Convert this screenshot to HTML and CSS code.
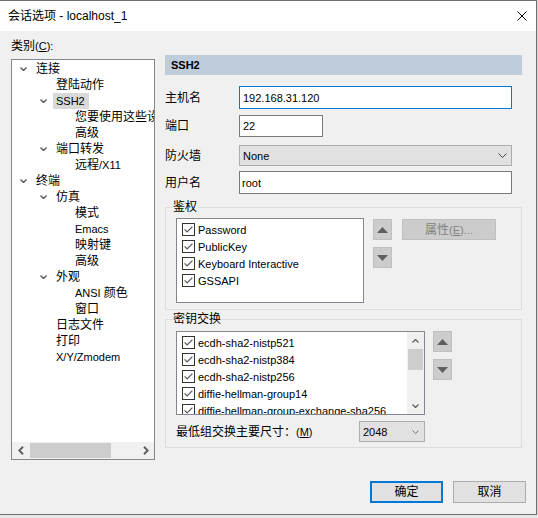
FILE: index.html
```html
<!DOCTYPE html>
<html lang="zh-CN">
<head>
<meta charset="utf-8">
<title>会话选项 - localhost_1</title>
<link rel="stylesheet" href="styles.css">
</head>
<body>
<div class="window">
  <div class="titlebar">
    <span class="title">会话选项 - localhost_1</span>
    <svg class="close" width="10" height="10" viewBox="0 0 10 10"><path d="M0.5 0.5 L9.5 9.5 M9.5 0.5 L0.5 9.5"/></svg>
  </div>
  <div class="client">
    <div class="main">
      <div class="left">
        <div class="cat-label">类别<span class="en">(<u>C</u>):</span></div>
        <div class="tree">
          <div class="tree-rows">
            <div class="node l0"><svg class="chev" width="7" height="4" viewBox="0 0 7 4"><path d="M0.5 0.5 L3.5 3.5 L6.5 0.5"/></svg><span>连接</span></div>
            <div class="node l1">登陆动作</div>
            <div class="node l1"><svg class="chev" width="7" height="4" viewBox="0 0 7 4"><path d="M0.5 0.5 L3.5 3.5 L6.5 0.5"/></svg><span class="sel en">SSH2</span></div>
            <div class="node l2">您要使用这些设置吗</div>
            <div class="node l2">高级</div>
            <div class="node l1"><svg class="chev" width="7" height="4" viewBox="0 0 7 4"><path d="M0.5 0.5 L3.5 3.5 L6.5 0.5"/></svg><span>端口转发</span></div>
            <div class="node l2">远程<span class="en">/X11</span></div>
            <div class="node l0"><svg class="chev" width="7" height="4" viewBox="0 0 7 4"><path d="M0.5 0.5 L3.5 3.5 L6.5 0.5"/></svg><span>终端</span></div>
            <div class="node l1"><svg class="chev" width="7" height="4" viewBox="0 0 7 4"><path d="M0.5 0.5 L3.5 3.5 L6.5 0.5"/></svg><span>仿真</span></div>
            <div class="node l2">模式</div>
            <div class="node l2"><span class="en">Emacs</span></div>
            <div class="node l2">映射键</div>
            <div class="node l2">高级</div>
            <div class="node l1"><svg class="chev" width="7" height="4" viewBox="0 0 7 4"><path d="M0.5 0.5 L3.5 3.5 L6.5 0.5"/></svg><span>外观</span></div>
            <div class="node l2"><span class="en">ANSI&nbsp;</span>颜色</div>
            <div class="node l2">窗口</div>
            <div class="node l1">日志文件</div>
            <div class="node l1">打印</div>
            <div class="node l1"><span class="en">X/Y/Zmodem</span></div>
          </div>
          <div class="hscroll">
            <div class="harrow"><svg width="6" height="9" viewBox="0 0 6 9"><path d="M5 0.8 L1.3 4.5 L5 8.2"/></svg></div>
            <div class="htrack"><div class="hthumb"></div></div>
            <div class="harrow"><svg width="6" height="9" viewBox="0 0 6 9"><path d="M1 0.8 L4.7 4.5 L1 8.2"/></svg></div>
          </div>
        </div>
      </div>

      <div class="right">
        <div class="header en">SSH2</div>
        <div class="frow r1"><span class="flabel">主机名</span><div class="field focus wide"><span class="en">192.168.31.120</span></div></div>
        <div class="frow r2"><span class="flabel">端口</span><div class="field port"><span class="en">22</span></div></div>
        <div class="frow r3"><span class="flabel">防火墙</span><div class="select wide"><span class="en">None</span><svg class="dd" width="9" height="5" viewBox="0 0 9 5"><path d="M0.5 0.5 L4.5 4.5 L8.5 0.5"/></svg></div></div>
        <div class="frow r4"><span class="flabel">用户名</span><div class="field wide user"><span class="en">root</span></div></div>

        <fieldset class="grp g1">
          <legend>鉴权</legend>
          <div class="grp-body">
            <div class="list list1">
              <div class="item"><svg class="cb" width="13" height="13" viewBox="0 0 13 13"><rect x="0.5" y="0.5" width="12" height="12"/><path d="M2.6 6.4 L5.1 8.9 L10.4 3.6"/></svg><span class="en">Password</span></div>
              <div class="item"><svg class="cb" width="13" height="13" viewBox="0 0 13 13"><rect x="0.5" y="0.5" width="12" height="12"/><path d="M2.6 6.4 L5.1 8.9 L10.4 3.6"/></svg><span class="en">PublicKey</span></div>
              <div class="item"><svg class="cb" width="13" height="13" viewBox="0 0 13 13"><rect x="0.5" y="0.5" width="12" height="12"/><path d="M2.6 6.4 L5.1 8.9 L10.4 3.6"/></svg><span class="en">Keyboard Interactive</span></div>
              <div class="item"><svg class="cb" width="13" height="13" viewBox="0 0 13 13"><rect x="0.5" y="0.5" width="12" height="12"/><path d="M2.6 6.4 L5.1 8.9 L10.4 3.6"/></svg><span class="en">GSSAPI</span></div>
            </div>
            <div class="arrows a1">
              <div class="abtn"><svg width="11" height="6" viewBox="0 0 11 6"><path d="M0 6 L5.5 0 L11 6 Z"/></svg></div>
              <div class="abtn"><svg width="11" height="6" viewBox="0 0 11 6"><path d="M0 0 L5.5 6 L11 0 Z"/></svg></div>
            </div>
            <div class="btn prop">属性<span class="en">(<u>E</u>)...</span></div>
          </div>
        </fieldset>

        <fieldset class="grp g2">
          <legend>密钥交换</legend>
          <div class="grp-body">
            <div class="list list2">
              <div class="items">
                <div class="item"><svg class="cb" width="13" height="13" viewBox="0 0 13 13"><rect x="0.5" y="0.5" width="12" height="12"/><path d="M2.6 6.4 L5.1 8.9 L10.4 3.6"/></svg><span class="en">ecdh-sha2-nistp521</span></div>
                <div class="item"><svg class="cb" width="13" height="13" viewBox="0 0 13 13"><rect x="0.5" y="0.5" width="12" height="12"/><path d="M2.6 6.4 L5.1 8.9 L10.4 3.6"/></svg><span class="en">ecdh-sha2-nistp384</span></div>
                <div class="item"><svg class="cb" width="13" height="13" viewBox="0 0 13 13"><rect x="0.5" y="0.5" width="12" height="12"/><path d="M2.6 6.4 L5.1 8.9 L10.4 3.6"/></svg><span class="en">ecdh-sha2-nistp256</span></div>
                <div class="item"><svg class="cb" width="13" height="13" viewBox="0 0 13 13"><rect x="0.5" y="0.5" width="12" height="12"/><path d="M2.6 6.4 L5.1 8.9 L10.4 3.6"/></svg><span class="en">diffie-hellman-group14</span></div>
                <div class="item"><svg class="cb" width="13" height="13" viewBox="0 0 13 13"><rect x="0.5" y="0.5" width="12" height="12"/><path d="M2.6 6.4 L5.1 8.9 L10.4 3.6"/></svg><span class="en">diffie-hellman-group-exchange-sha256</span></div>
              </div>
              <div class="vscroll">
                <div class="varrow"><svg width="7" height="4" viewBox="0 0 7 4"><path d="M0.5 3.5 L3.5 0.5 L6.5 3.5"/></svg></div>
                <div class="vtrack"><div class="vthumb"></div></div>
                <div class="varrow"><svg width="7" height="4" viewBox="0 0 7 4"><path d="M0.5 0.5 L3.5 3.5 L6.5 0.5"/></svg></div>
              </div>
            </div>
            <div class="arrows a2">
              <div class="abtn"><svg width="11" height="6" viewBox="0 0 11 6"><path d="M0 6 L5.5 0 L11 6 Z"/></svg></div>
              <div class="abtn"><svg width="11" height="6" viewBox="0 0 11 6"><path d="M0 0 L5.5 6 L11 0 Z"/></svg></div>
            </div>
          </div>
          <div class="minrow">
            <span>最低组交换主要尺寸：<span class="en">(<u>M</u>)</span></span>
            <div class="select small"><span class="en">2048</span><svg class="dd light" width="7" height="4" viewBox="0 0 7 4"><path d="M0.5 0.5 L3.5 3.5 L6.5 0.5"/></svg></div>
          </div>
        </fieldset>
      </div>
    </div>
    <div class="footer">
      <div class="btn ok">确定</div>
      <div class="btn cancel">取消</div>
    </div>
  </div>
</div>
</body>
</html>
```

FILE: styles.css
```css
* { box-sizing: border-box; }
html { background: #e6e6e6; }
body {
  margin: 0;
  font-family: "Liberation Sans", "Noto Sans CJK SC", sans-serif;
  font-size: 12px;
  line-height: 16px;
  color: #000;
}
.en { font-size: 11px; }
u { text-decoration: underline; text-underline-offset: 1px; }

.window {
  width: 537px;
  height: 515px;
  border-top: 1px solid #707070;
  border-right: 1px solid #707070;
  border-bottom: 1px solid #707070;
  background: #f0f0f0;
  display: flex;
  flex-direction: column;
  box-shadow: 0 1px 3px rgba(0, 0, 0, 0.22);
}

.titlebar {
  height: 30px;
  flex: none;
  background: #fff;
  display: flex;
  align-items: center;
  padding: 0 9px 0 8px;
}
.title { flex: 1; font-size: 12px; }
.close { fill: none; stroke: #000; stroke-width: 1; }

.client {
  flex: 1;
  display: flex;
  flex-direction: column;
  padding: 7px 10px 0 11px;
}
.main {
  display: grid;
  grid-template-columns: 144px 357px;
  column-gap: 10px;
  align-items: start;
}

/* left tree */
.cat-label { height: 16px; }
.tree {
  margin-top: 5px;
  height: 401px;
  border: 1px solid #828790;
  background: #fff;
  display: flex;
  flex-direction: column;
}
.tree-rows {
  flex: 1;
  overflow: hidden;
  padding-top: 1px;
}
.node {
  height: 16px;
  display: flex;
  align-items: center;
  white-space: nowrap;
}
.node.l0 { padding-left: 24px; }
.node.l1 { padding-left: 44px; }
.node.l2 { padding-left: 63px; }
.chev {
  flex: none;
  margin-left: -16px;
  margin-right: 9px;
  fill: none;
  stroke: #555;
  stroke-width: 1.4;
}
.sel {
  background: #d9d9d9;
  height: 16px;
  padding: 0 4px 0 3px;
  margin-left: -3px;
}

.hscroll {
  flex: none;
  height: 17px;
  background: #f0f0f0;
  display: flex;
}
.harrow {
  width: 17px;
  display: flex;
  align-items: center;
  justify-content: center;
}
.harrow svg { fill: none; stroke: #606060; stroke-width: 2; }
.htrack { flex: 1; padding: 1px 0 1px 1px; }
.hthumb { width: 81px; height: 15px; background: #cdcdcd; }

/* right panel */
.right { margin-top: 17px; }
.header {
  height: 20px;
  background: #bfcddb;
  font-weight: bold;
  padding-left: 6px;
  display: flex;
  align-items: center;
}
.frow { display: flex; align-items: center; }
.flabel { width: 74px; flex: none; }
.r1 { margin-top: 11px; height: 23px; }
.r2 { margin-top: 6px; height: 22px; }
.r3 { margin-top: 8px; height: 21px; }
.r4 { margin-top: 5px; height: 23px; }

.field {
  height: 100%;
  border: 1px solid #7a7a7a;
  background: #fff;
  display: flex;
  align-items: center;
  padding-left: 3px;
}
.field.focus { border-color: #0078d7; }
.field.user { padding-left: 2px; }
.wide { width: 273px; }
.port { width: 84px; }

.select {
  height: 100%;
  border: 1px solid #adadad;
  background: #e1e1e1;
  display: flex;
  align-items: center;
  justify-content: space-between;
  padding: 0 4px 0 3px;
}
.dd { fill: none; stroke: #444; stroke-width: 1; }
.dd.light { stroke: #777; margin-right: 1px; }

/* groups */
.grp {
  margin: 0;
  border: 1px solid #dcdcdc;
  padding: 0 10px 0 10px;
  min-width: 0;
}
.grp legend {
  padding: 0 1px;
  margin-left: -4px;
  line-height: 16px;
}
.g1 { margin-top: 5px; padding-top: 3px; padding-bottom: 6px; }
.g2 { margin-top: 1px; padding-top: 4px; padding-bottom: 5px; }
.grp-body { display: flex; align-items: flex-start; }

.list {
  border: 1px solid #828790;
  background: #fff;
}
.list1 { width: 188px; height: 85px; padding-top: 2px; }
.list2 { width: 249px; height: 84px; display: flex; }
.items { flex: 1; overflow: hidden; padding-top: 2px; min-width: 0; }
.item {
  height: 17px;
  display: flex;
  align-items: center;
  padding-left: 5px;
  white-space: nowrap;
}
.cb { flex: none; margin-right: 3px; }
.cb rect { fill: #fff; stroke: #333; }
.cb path { fill: none; stroke: #555; stroke-width: 1.2; }

.vscroll {
  width: 17px;
  flex: none;
  background: #f0f0f0;
  display: flex;
  flex-direction: column;
}
.varrow {
  height: 17px;
  display: flex;
  align-items: center;
  justify-content: center;
}
.varrow svg { fill: none; stroke: #606060; stroke-width: 1.3; }
.vtrack { flex: 1; padding: 0 1px; }
.vthumb { height: 21px; background: #cdcdcd; }

.arrows { display: flex; flex-direction: column; gap: 7px; }
.a1 { margin-left: 9px; margin-top: 1px; }
.a2 { margin-left: 8px; }
.abtn {
  width: 19px;
  height: 21px;
  background: #cccccc;
  border: 1px solid #bfbfbf;
  display: flex;
  align-items: center;
  justify-content: center;
}
.abtn svg { fill: #606060; }

.btn {
  display: flex;
  align-items: center;
  justify-content: center;
}
.prop {
  margin-left: 10px;
  margin-top: 1px;
  width: 94px;
  height: 21px;
  background: #cccccc;
  border: 1px solid #bfbfbf;
  color: #838383;
}

.minrow {
  width: 249px;
  margin-top: 6px;
  height: 21px;
  display: flex;
  align-items: center;
  justify-content: space-between;
}
.select.small { width: 66px; }

/* footer */
.footer {
  margin-top: 21px;
  display: flex;
  justify-content: flex-end;
  gap: 10px;
}
.footer .btn {
  width: 73px;
  height: 22px;
  background: #e1e1e1;
  border: 1px solid #adadad;
}
.footer .ok { border: 2px solid #0078d7; }
```
